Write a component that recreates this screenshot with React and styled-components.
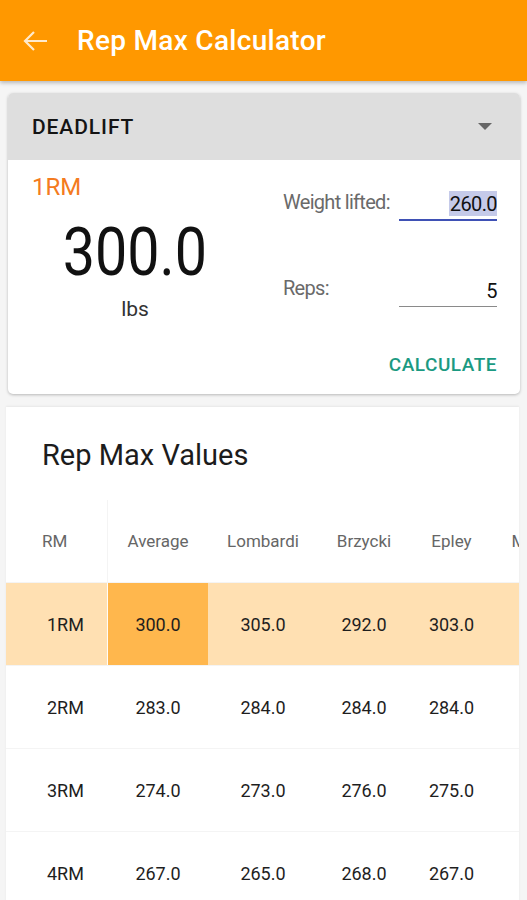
import React from 'react'
import styled, { createGlobalStyle } from 'styled-components';

const GlobalStyle = createGlobalStyle`
  body {
    margin: 0;
    background: #f5f5f5;
    font-family: Roboto, "Liberation Sans", Arial, sans-serif;
  }
`;

const rows = [
  { rm: '1RM', values: ['300.0', '305.0', '292.0', '303.0', ''], active: true },
  { rm: '2RM', values: ['283.0', '284.0', '284.0', '284.0', ''] },
  { rm: '3RM', values: ['274.0', '273.0', '276.0', '275.0', ''] },
  { rm: '4RM', values: ['267.0', '265.0', '268.0', '267.0', ''] },
];

const headers = ['Average', 'Lombardi', 'Brzycki', 'Epley', 'Mayhew'];

const App = () => {
  return (
    <StPage>
      <GlobalStyle />
      <StAppBar>
        <StBack viewBox="0 0 26 22" width="26" height="22">
          <path d="M25 11H3M12 2L3 11l9 9" fill="none" stroke="currentColor" strokeWidth="2.2" />
        </StBack>
        <StAppTitle>Rep Max Calculator</StAppTitle>
      </StAppBar>

      <StContent>
        <StCard>
          <StCardHeader>
            <StLiftName>DEADLIFT</StLiftName>
            <StCaret />
          </StCardHeader>
          <StCardBody>
            <StResult>
              <StResultLabel>1RM</StResultLabel>
              <StResultValue>300.0</StResultValue>
              <StUnit>lbs</StUnit>
            </StResult>
            <StForm>
              <StField>
                <StFieldLabel>Weight lifted:</StFieldLabel>
                <StInputLine focused>
                  <StSelected>260.0</StSelected>
                </StInputLine>
              </StField>
              <StField reps>
                <StFieldLabel>Reps:</StFieldLabel>
                <StInputLine>5</StInputLine>
              </StField>
              <StCalcButton>CALCULATE</StCalcButton>
            </StForm>
          </StCardBody>
        </StCard>

        <StTableCard>
          <StTableTitle>Rep Max Values</StTableTitle>
          <StTable>
            <StRow>
              <StHeadCell first>RM</StHeadCell>
              {headers.map((h) => (
                <StHeadCell key={h}>{h}</StHeadCell>
              ))}
            </StRow>
            {rows.map((row) => (
              <StRow key={row.rm} active={row.active}>
                <StCell first>{row.rm}</StCell>
                {row.values.map((v, i) => (
                  <StCell key={i} strong={row.active && i === 0}>{v}</StCell>
                ))}
              </StRow>
            ))}
          </StTable>
        </StTableCard>
      </StContent>
    </StPage>
  )
}

const StPage = styled.div`
  width: 527px;
  height: 900px;
  overflow: hidden;
  background: #f5f5f5;
`;

const StAppBar = styled.div`
  display: flex;
  align-items: center;
  height: 81px;
  padding: 0 0 0 22px;
  background-color: #ff9800;
  box-shadow: 0 2px 4px rgba(0, 0, 0, 0.25);
  position: relative;
  z-index: 1;
`;

const StBack = styled.svg`
  color: rgba(255, 255, 255, 0.8);
  margin-top: 1px;
`;

const StAppTitle = styled.div`
  margin: 0 0 0 29px;
  color: #ffffff;
  font-size: 28px;
  font-weight: 500;
  letter-spacing: 0.3px;
`;

const StContent = styled.div`
  display: flex;
  flex-direction: column;
  padding: 12px 7px 0 7px;
  gap: 13px;
`;

const StCard = styled.div`
  margin: 0 0 0 1px;
  background: #ffffff;
  border-radius: 5px;
  overflow: hidden;
  box-shadow: 0 1px 3px rgba(0, 0, 0, 0.25);
`;

const StCardHeader = styled.div`
  display: flex;
  align-items: center;
  justify-content: space-between;
  height: 67px;
  padding: 0 28px 0 24px;
  background-color: #dedede;
`;

const StLiftName = styled.div`
  font-size: 21px;
  font-weight: 500;
  color: #141414;
  letter-spacing: 0.9px;
`;

const StCaret = styled.div`
  width: 0;
  height: 0;
  border-left: 7px solid transparent;
  border-right: 7px solid transparent;
  border-top: 7px solid #666666;
`;

const StCardBody = styled.div`
  display: flex;
  justify-content: space-between;
  height: 234px;
  padding: 0 23px 0 24px;
`;

const StResult = styled.div`
  display: flex;
  flex-direction: column;
  align-items: center;
  width: 206px;
  padding: 13px 0 0 0;
`;

const StResultLabel = styled.div`
  align-self: flex-start;
  font-size: 24px;
  line-height: 28px;
  color: #f47b20;
`;

const StResultValue = styled.div`
  margin: 15px 0 0 0;
  font-size: 66px;
  line-height: 74px;
  color: #111111;
  transform: scaleX(0.87);
`;

const StUnit = styled.div`
  margin: 7px 0 0 0;
  font-size: 21px;
  line-height: 24px;
  color: #333333;
`;

const StForm = styled.div`
  display: flex;
  flex-direction: column;
  align-items: flex-end;
  padding: 30px 0 0 0;
`;

const StField = styled.div`
  display: flex;
  align-items: flex-end;
  margin: ${(p) => (p.reps ? '55px 0 0 0' : '0')};
`;

const StFieldLabel = styled.div`
  width: 116px;
  padding: 0 0 7px 0;
  font-size: 20px;
  letter-spacing: -0.7px;
  color: #6a6a6a;
`;

const StInputLine = styled.div`
  display: flex;
  justify-content: flex-end;
  align-items: flex-end;
  width: 98px;
  height: 31px;
  padding: 0 0 3px 0;
  box-sizing: border-box;
  font-size: 20px;
  letter-spacing: -0.6px;
  color: #111111;
  border-bottom: ${(p) => (p.focused ? '2px solid #3f51b5' : '1px solid #8a8a8a')};
`;

const StSelected = styled.span`
  padding: 1px 0 0 1px;
  background: #c5cae9;
`;

const StCalcButton = styled.div`
  margin: 46px 0 0 0;
  font-size: 19px;
  font-weight: 500;
  color: #1b9a82;
  letter-spacing: 0.5px;
`;

const StTableCard = styled.div`
  margin: 0 1px 0 -1px;
  padding: 31px 0 0 0;
  background: #ffffff;
  box-shadow: 0 -1px 2px rgba(0, 0, 0, 0.06);
  min-height: 500px;
`;

const StTableTitle = styled.div`
  padding: 0 0 0 36px;
  font-size: 29px;
  line-height: 34px;
  color: #1c1c1c;
`;

const StTable = styled.div`
  display: flex;
  flex-direction: column;
  margin: 28px 0 0 0;
  overflow: hidden;
`;

const StRow = styled.div`
  display: grid;
  grid-template-columns: 102px 100px 110px 92px 83px 100px;
  height: 83px;
  background: ${(p) => (p.active ? '#ffe0b2' : 'transparent')};
  border-bottom: 1px solid #f4f4f4;
  box-sizing: border-box;
`;

const StHeadCell = styled.div`
  display: flex;
  align-items: center;
  justify-content: ${(p) => (p.first ? 'flex-start' : 'center')};
  padding: ${(p) => (p.first ? '0 0 0 36px' : '0 0 0 0')};
  font-size: 17px;
  color: #666666;
  white-space: nowrap;
  border-right: ${(p) => (p.first ? '1px solid #f4f4f4' : 'none')};
`;

const StCell = styled.div`
  display: flex;
  align-items: center;
  justify-content: ${(p) => (p.first ? 'flex-start' : 'center')};
  padding: ${(p) => (p.first ? '0 0 0 41px' : '0')};
  font-size: 18px;
  color: #1e1e1e;
  white-space: nowrap;
  background: ${(p) => (p.strong ? '#ffb74d' : 'transparent')};
  border-right: ${(p) => (p.first ? '1px solid rgba(255, 255, 255, 0.9)' : 'none')};
`;

export default App
